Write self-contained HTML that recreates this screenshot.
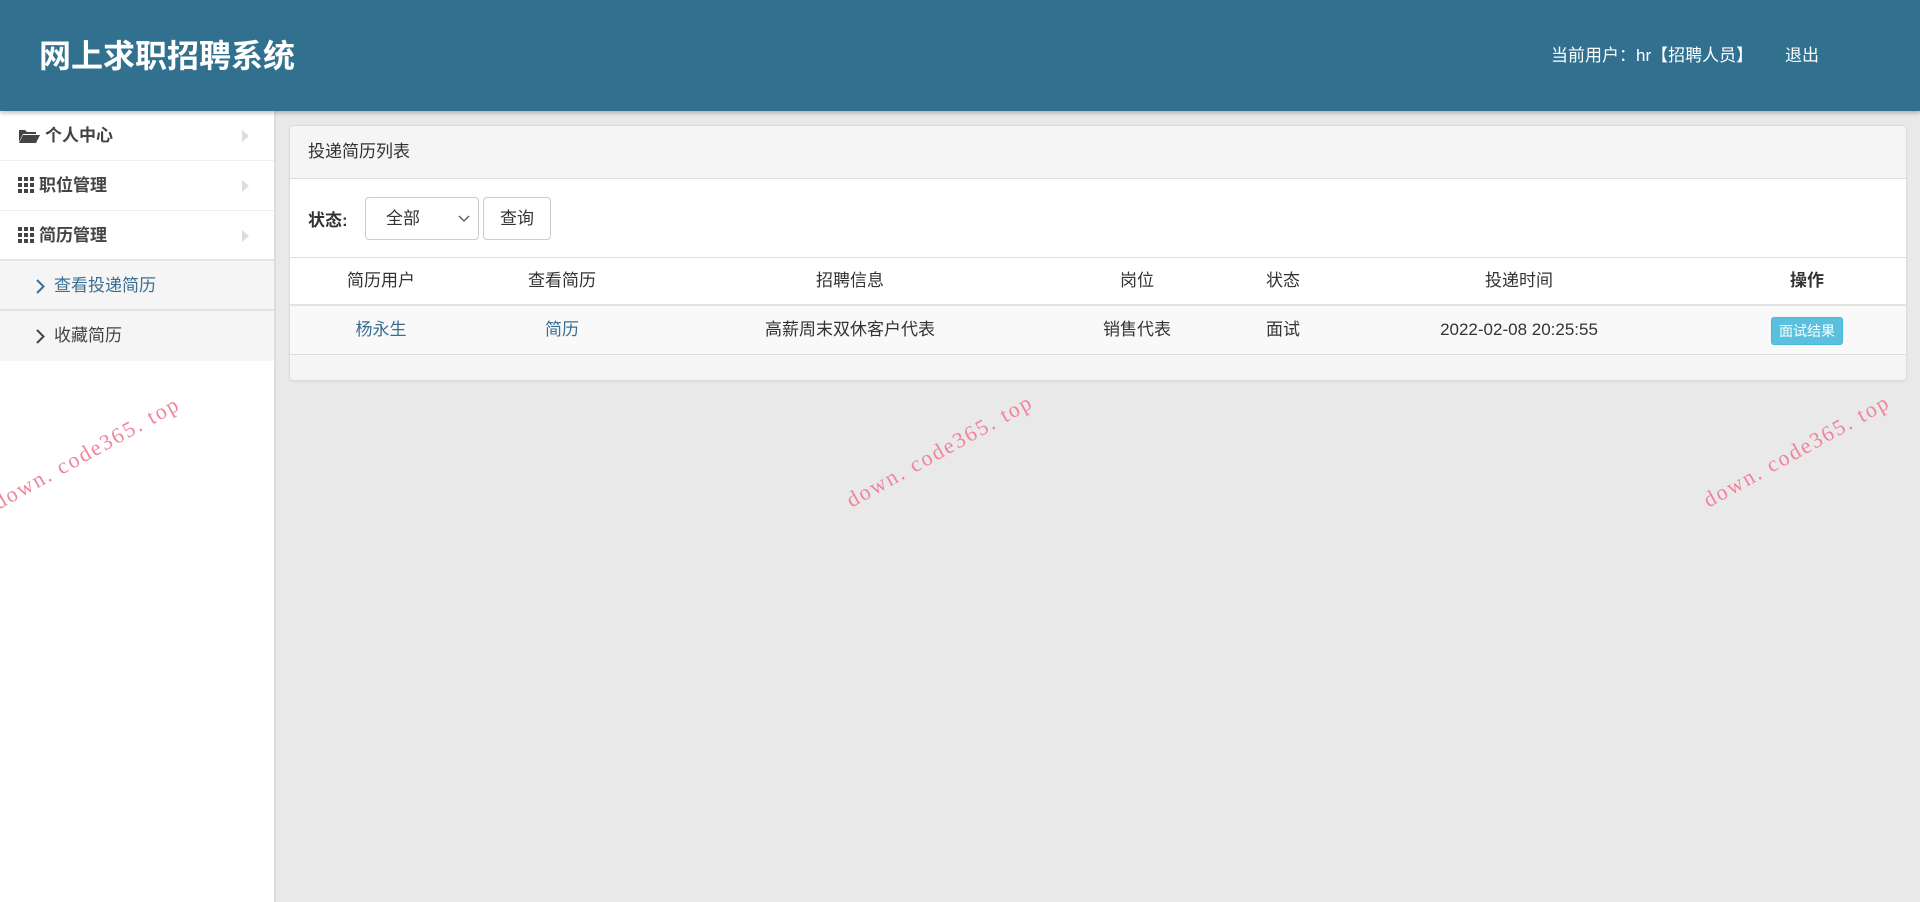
<!DOCTYPE html>
<html><head><meta charset="utf-8"><style>
*{margin:0;padding:0;box-sizing:border-box}
body{width:1920px;height:902px;overflow:hidden;background:#e9e9e9;font-family:"Liberation Sans","Noto Sans CJK SC",sans-serif;color:#333;position:relative}
.hd{position:absolute;left:0;top:0;width:1920px;height:111px;background:#31718f;box-shadow:0 2px 4px rgba(0,0,0,.25);z-index:2}
.hd h1{position:absolute;left:39px;top:36px;font-size:32px;color:#fff;font-weight:bold;line-height:40px}
.hd .u{position:absolute;left:1551px;top:44px;font-size:17px;color:#fff;line-height:24px}
.hd .q{position:absolute;left:1785px;top:44px;font-size:17px;color:#fff;line-height:24px}
.sb{position:absolute;left:0;top:111px;width:276px;height:791px;background:#fff;border-right:2px solid #ddd}
.it{height:50px;line-height:50px;font-size:17px;font-weight:bold;color:#444;border-bottom:1px solid #eee;padding-left:18px;position:relative}
.it svg{vertical-align:-2px;margin-right:5px}
.it .ar{position:absolute;right:20px;top:19px}
.sub{height:50px;line-height:50px;font-size:17px;background:#f5f5f5;border-bottom:2px solid #e3e3e3;padding-left:36px;color:#444;position:relative}
.sub svg{position:absolute;left:36px;top:18px}
.sub span{margin-left:18px}
.sub.a{color:#3a6f93}
.pn{position:absolute;left:289px;top:125px;width:1618px;height:256px;background:#fff;border:1px solid #ddd;border-radius:4px;overflow:hidden;box-shadow:0 1px 2px rgba(0,0,0,.05)}
.ph{height:53px;background:#f5f5f5;border-bottom:1px solid #ddd;line-height:52px;padding-left:18px;font-size:17px}
.fl{height:79px;border-bottom:1px solid #ddd;position:relative}
.fl b{position:absolute;left:18px;top:27px;font-size:17px}
.sel{position:absolute;left:75px;top:18px;width:114px;height:43px;border:1px solid #ccc;border-radius:4px;font-size:17px;line-height:41px;padding-left:20px}
.sel svg{position:absolute;right:8px;top:17px}
.btn{position:absolute;left:193px;top:18px;width:68px;height:43px;border:1px solid #ccc;border-radius:4px;font-size:17px;line-height:41px;text-align:center}
.row{position:absolute;left:0;width:100%;font-size:17px}
.c{position:absolute;transform:translateX(-50%);white-space:nowrap}
.th{top:132px;height:48px;border-bottom:2px solid #e3e3e3;line-height:46px}
.tr{top:180px;height:49px;background:#f9f9f9;border-bottom:1px solid #ddd;line-height:48px}
.ft{top:229px;height:27px;background:#f5f5f5}
.lk{color:#3a6f93}
.ib{display:inline-block;background:#5bc0de;color:#fff;font-size:14px;line-height:26px;padding:0 7px;border-radius:3px;border:1px solid #46b8da;vertical-align:middle}
.wm{position:absolute;font-family:"Liberation Serif",serif;font-size:22px;color:#f0849f;transform:rotate(-29deg);white-space:nowrap;letter-spacing:2px}
</style></head><body>
<div class="hd"><h1>网上求职招聘系统</h1><div class="u">当前用户：hr【招聘人员】</div><div class="q">退出</div></div>
<div class="sb">
<div class="it"><svg width="22" height="16" viewBox="0 0 22 16"><path d="M1 3h6l2 2h9v2H5L1 15z" fill="#444"/><path d="M5 8h17l-4 8H1z" fill="#444"/></svg>个人中心<svg class="ar" width="7" height="12" viewBox="0 0 7 12"><path d="M0 0l7 6-7 6z" fill="#ddd"/></svg></div>
<div class="it"><svg width="16" height="16" viewBox="0 0 16 16" fill="#444"><rect x="0" y="0" width="4" height="4"/><rect x="6" y="0" width="4" height="4"/><rect x="12" y="0" width="4" height="4"/><rect x="0" y="6" width="4" height="4"/><rect x="6" y="6" width="4" height="4"/><rect x="12" y="6" width="4" height="4"/><rect x="0" y="12" width="4" height="4"/><rect x="6" y="12" width="4" height="4"/><rect x="12" y="12" width="4" height="4"/></svg>职位管理<svg class="ar" width="7" height="12" viewBox="0 0 7 12"><path d="M0 0l7 6-7 6z" fill="#ddd"/></svg></div>
<div class="it" style="border-bottom:2px solid #e3e3e3"><svg width="16" height="16" viewBox="0 0 16 16" fill="#444"><rect x="0" y="0" width="4" height="4"/><rect x="6" y="0" width="4" height="4"/><rect x="12" y="0" width="4" height="4"/><rect x="0" y="6" width="4" height="4"/><rect x="6" y="6" width="4" height="4"/><rect x="12" y="6" width="4" height="4"/><rect x="0" y="12" width="4" height="4"/><rect x="6" y="12" width="4" height="4"/><rect x="12" y="12" width="4" height="4"/></svg>简历管理<svg class="ar" width="7" height="12" viewBox="0 0 7 12"><path d="M0 0l7 6-7 6z" fill="#ddd"/></svg></div>
<div class="sub a"><svg width="9" height="15" viewBox="0 0 9 15"><path d="M1 1l6.5 6.5L1 14" stroke="#3a6f93" stroke-width="2" fill="none"/></svg><span>查看投递简历</span></div>
<div class="sub" style="border-bottom:none"><svg width="9" height="15" viewBox="0 0 9 15"><path d="M1 1l6.5 6.5L1 14" stroke="#444" stroke-width="2" fill="none"/></svg><span>收藏简历</span></div>
</div>
<div class="pn">
<div class="ph">投递简历列表</div>
<div class="fl"><b>状态:</b><div class="sel">全部<svg width="12" height="8" viewBox="0 0 12 8"><path d="M1 1l5 5 5-5" stroke="#555" stroke-width="1.3" fill="none"/></svg></div><div class="btn">查询</div></div>
<div class="row th"><span class="c" style="left:91px">简历用户</span><span class="c" style="left:272px">查看简历</span><span class="c" style="left:560px">招聘信息</span><span class="c" style="left:847px">岗位</span><span class="c" style="left:993px">状态</span><span class="c" style="left:1229px">投递时间</span><span class="c" style="left:1517px;font-weight:bold">操作</span></div>
<div class="row tr"><span class="c lk" style="left:91px">杨永生</span><span class="c lk" style="left:272px">简历</span><span class="c" style="left:560px">高薪周末双休客户代表</span><span class="c" style="left:847px">销售代表</span><span class="c" style="left:993px">面试</span><span class="c" style="left:1229px">2022-02-08 20:25:55</span><span class="c" style="left:1517px"><span class="ib">面试结果</span></span></div>
<div class="row ft"></div>
</div>
<div class="wm" style="left:-18px;top:440px">down. code365. top</div>
<div class="wm" style="left:835px;top:438px">down. code365. top</div>
<div class="wm" style="left:1692px;top:438px">down. code365. top</div>
</body></html>
